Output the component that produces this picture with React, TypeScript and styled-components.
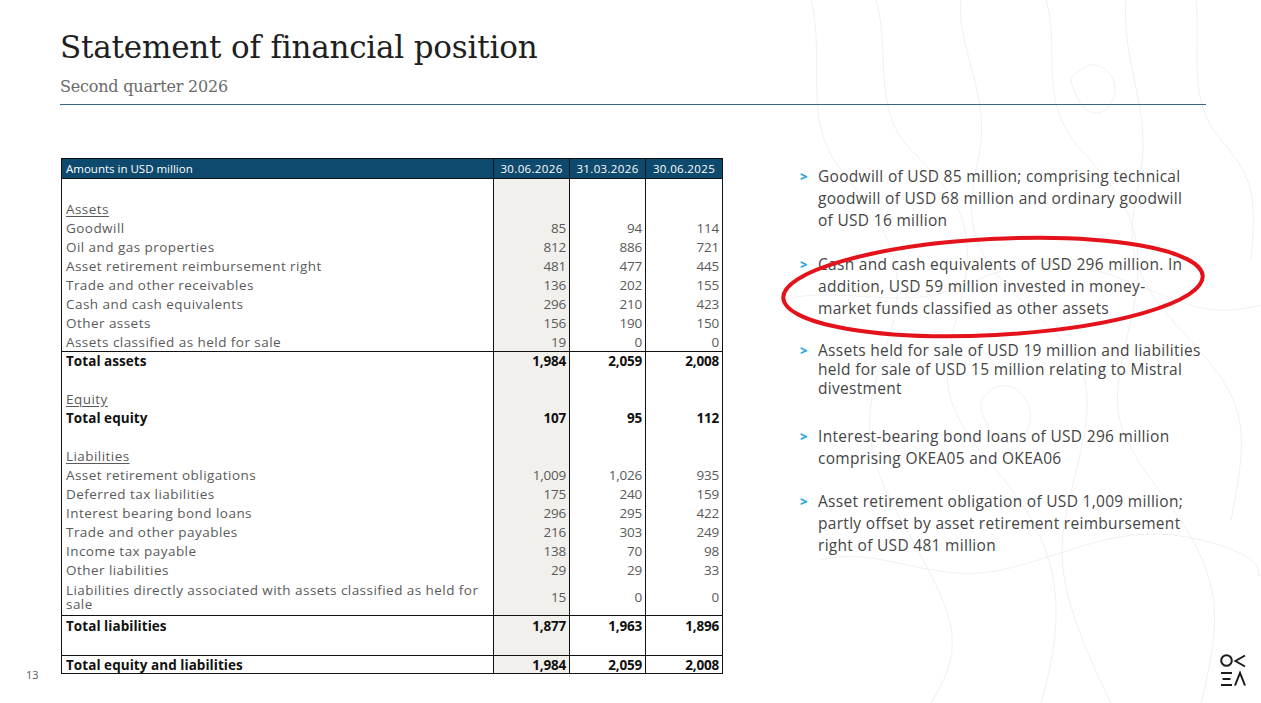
import React from 'react';
import styled, { createGlobalStyle } from 'styled-components';

const GlobalStyle = createGlobalStyle`
    html, body {
        margin: 0;
        padding: 0;
        background: #ffffff;
    }
`;

const Slide = styled.div`
    position: relative;
    width: 1261px;
    height: 703px;
    overflow: hidden;
    background: #ffffff;
    display: flex;
    flex-direction: column;
    font-family: 'Open Sans', 'DejaVu Sans', sans-serif;
`;

const Contours = styled.svg`
    position: absolute;
    right: 0;
    top: 0;
    width: 480px;
    height: 703px;
    pointer-events: none;
`;

const Header = styled.header`
    position: relative;
    flex: none;
    margin: 0 55px 0 60px;
    padding-top: 27px;
    border-bottom: 1.5px solid #3b6683;
    height: 105px;
    box-sizing: border-box;
`;

const Title = styled.h1`
    margin: 0;
    font-family: 'DejaVu Serif', 'Liberation Serif', serif;
    font-weight: 400;
    font-size: 31px;
    line-height: 40px;
    color: #1f1f1f;
    letter-spacing: -0.2px;
`;

const Subtitle = styled.div`
    margin-top: 8px;
    font-family: 'DejaVu Serif', 'Liberation Serif', serif;
    font-size: 16px;
    line-height: 24px;
    color: #6a6a6a;
    letter-spacing: -0.2px;
`;

const Main = styled.main`
    position: relative;
    flex: 1;
    display: grid;
    grid-template-columns: 61px 661px 1fr auto;
    padding-top: 53px;
`;

const PageNumber = styled.div`
    align-self: end;
    padding: 0 0 21px 26px;
    font-size: 11px;
    color: #5a5a5a;
`;

const Table = styled.table`
    align-self: start;
    width: 661px;
    border-collapse: collapse;
    table-layout: fixed;
    border: 1px solid #111;
    font-size: 13.5px;
`;

const HeadCell = styled.th<{ $num?: boolean }>`
    height: 19px;
    padding: 0 4px;
    background: #0e4a6e;
    color: #ffffff;
    font-weight: 400;
    font-size: 11.5px;
    letter-spacing: ${({ $num }) => ($num ? '0.35px' : '0')};
    text-align: ${({ $num }) => ($num ? 'center' : 'left')};
    border-left: ${({ $num }) => ($num ? '1px solid #111' : 'none')};
    border-bottom: 1px solid #111;
`;

const Row = styled.tr<{ $ruled?: boolean; $h?: number }>`
    height: ${({ $h }) => $h ?? 19}px;
    border-top: ${({ $ruled }) => ($ruled ? '1px solid #111' : 'none')};
`;

const Label = styled.td<{ $bold?: boolean; $heading?: boolean; $top?: boolean }>`
    padding: ${({ $top }) => ($top ? '3px' : '0')} 10px 0 4px;
    line-height: 14px;
    vertical-align: ${({ $top }) => ($top ? 'top' : 'middle')};
    color: ${({ $bold }) => ($bold ? '#111' : '#5a5a5a')};
    font-weight: ${({ $bold }) => ($bold ? 700 : 400)};
    letter-spacing: ${({ $bold }) => ($bold ? '0.05px' : '0.45px')};
    text-decoration: ${({ $heading }) => ($heading ? 'underline' : 'none')};
    text-underline-offset: 2px;
    white-space: nowrap;
`;

const Num = styled.td<{ $bold?: boolean; $shade?: boolean; $top?: boolean }>`
    padding: ${({ $top }) => ($top ? '3px' : '0')} 3px 0 0;
    vertical-align: ${({ $top }) => ($top ? 'top' : 'middle')};
    text-align: right;
    line-height: 14px;
    border-left: 1px solid #111;
    background: ${({ $shade }) => ($shade ? '#f1f0ec' : 'transparent')};
    color: ${({ $bold }) => ($bold ? '#111' : '#5a5a5a')};
    font-weight: ${({ $bold }) => ($bold ? 700 : 400)};
    letter-spacing: -0.2px;
`;

const Notes = styled.ul`
    list-style: none;
    margin: 0;
    padding: 7px 0 0 78px;
`;

const Note = styled.li<{ $tight?: boolean; $after?: number }>`
    position: relative;
    display: flex;
    gap: 10px;
    font-size: 15.5px;
    letter-spacing: 0.3px;
    line-height: ${({ $tight }) => ($tight ? 19 : 22)}px;
    color: #454545;
    margin-bottom: ${({ $after }) => $after ?? 22}px;
    white-space: nowrap;
`;

const Chevron = styled.span`
    color: #2aa8e0;
    font-weight: 800;
    font-size: 13px;
    width: 8px;
`;

const Circle = styled.svg`
    position: absolute;
    left: -22px;
    top: -26px;
    width: 430px;
    height: 118px;
    overflow: visible;
    pointer-events: none;
`;

const LogoWrap = styled.div`
    align-self: end;
    padding: 0 14px 12px 0;
`;

type Line = { label: string; v?: [string, string, string]; bold?: boolean; heading?: boolean; ruled?: boolean; h?: number; top?: boolean };

const lines: Line[] = [
    { label: '', h: 21 },
    { label: 'Assets', heading: true },
    { label: 'Goodwill', v: ['85', '94', '114'] },
    { label: 'Oil and gas properties', v: ['812', '886', '721'] },
    { label: 'Asset retirement reimbursement right', v: ['481', '477', '445'] },
    { label: 'Trade and other receivables', v: ['136', '202', '155'] },
    { label: 'Cash and cash equivalents', v: ['296', '210', '423'] },
    { label: 'Other assets', v: ['156', '190', '150'] },
    { label: 'Assets classified as held for sale', v: ['19', '0', '0'] },
    { label: 'Total assets', v: ['1,984', '2,059', '2,008'], bold: true, ruled: true },
    { label: '' },
    { label: 'Equity', heading: true },
    { label: 'Total equity', v: ['107', '95', '112'], bold: true },
    { label: '' },
    { label: 'Liabilities', heading: true },
    { label: 'Asset retirement obligations', v: ['1,009', '1,026', '935'] },
    { label: 'Deferred tax liabilities', v: ['175', '240', '159'] },
    { label: 'Interest bearing bond loans', v: ['296', '295', '422'] },
    { label: 'Trade and other payables', v: ['216', '303', '249'] },
    { label: 'Income tax payable', v: ['138', '70', '98'] },
    { label: 'Other liabilities', v: ['29', '29', '33'] },
    { label: 'Liabilities directly associated with assets classified as held for\nsale', v: ['15', '0', '0'], h: 36 },
    { label: 'Total liabilities', v: ['1,877', '1,963', '1,896'], bold: true, ruled: true, h: 40, top: true },
    { label: 'Total equity and liabilities', v: ['1,984', '2,059', '2,008'], bold: true, ruled: true, h: 18 },
];

const notes: { text: string[]; tight?: boolean; after?: number; circled?: boolean }[] = [
    { text: ['Goodwill of USD 85 million; comprising technical', 'goodwill of USD 68 million and ordinary goodwill', 'of USD 16 million'] },
    { text: ['Cash and cash equivalents of USD 296 million. In', 'addition, USD 59 million invested in money-', 'market funds classified as other assets'], circled: true },
    { text: ['Assets held for sale of USD 19 million and liabilities', 'held for sale of USD 15 million relating to Mistral', 'divestment'], tight: true, after: 27 },
    { text: ['Interest-bearing bond loans of USD 296 million', 'comprising OKEA05 and OKEA06'], after: 21 },
    { text: ['Asset retirement obligation of USD 1,009 million;', 'partly offset by asset retirement reimbursement', 'right of USD 481 million'] },
];

const contourPaths = [
    'M30 0 C45 60 20 120 60 170 S130 260 110 330 S70 430 120 520 S190 640 150 703',
    'M95 0 C110 50 90 110 130 150 S200 220 180 300 S155 400 215 470 S290 600 260 703',
    'M180 0 C175 40 205 90 200 140 S170 230 230 290 S320 360 300 450 S260 560 330 703',
    'M265 0 C280 50 255 100 300 150 S370 230 350 320 S325 420 385 500 S440 620 420 703',
    'M345 0 C340 60 370 110 360 170 S335 260 400 330 S470 420 450 520',
    'M415 0 C420 50 405 100 440 140 S475 200 470 260',
    'M0 300 C60 285 120 310 170 290 S260 250 330 275 S420 320 480 305',
    'M40 560 C100 545 150 585 220 570 S340 520 420 540 S470 580 480 575',
    'M300 70 C315 55 340 75 333 97 S305 118 296 97 S288 78 300 70',
    'M210 390 C232 375 255 402 248 425 S218 448 208 428 S195 402 210 390',
];

const Logo = () => (
    <svg width="27" height="32" viewBox="0 0 27 32" fill="none" stroke="#1c1c1c" strokeWidth="2">
        <circle cx="6.5" cy="6.5" r="5.3" />
        <polyline points="25,1.5 15.5,7 25,12.5" />
        <line x1="1" y1="19" x2="12" y2="19" />
        <line x1="2.5" y1="25" x2="10.5" y2="25" />
        <line x1="1" y1="31" x2="12" y2="31" />
        <polyline points="15,31.5 20,19 25,31.5" />
    </svg>
);

export default function App() {
    return (
        <Slide>
            <GlobalStyle />
            <Contours viewBox="0 0 480 703" fill="none" stroke="#ececec" strokeWidth="0.8">
                {contourPaths.map((d, i) => (
                    <path key={i} d={d} />
                ))}
            </Contours>
            <Header>
                <Title>Statement of financial position</Title>
                <Subtitle>Second quarter 2026</Subtitle>
            </Header>
            <Main>
                <PageNumber>13</PageNumber>
                <Table>
                    <colgroup>
                        <col style={{ width: 432 }} />
                        <col style={{ width: 76 }} />
                        <col style={{ width: 76 }} />
                        <col style={{ width: 77 }} />
                    </colgroup>
                    <thead>
                        <tr>
                            <HeadCell>Amounts in USD million</HeadCell>
                            <HeadCell $num>30.06.2026</HeadCell>
                            <HeadCell $num>31.03.2026</HeadCell>
                            <HeadCell $num>30.06.2025</HeadCell>
                        </tr>
                    </thead>
                    <tbody>
                        {lines.map((l, i) => (
                            <Row key={i} $ruled={l.ruled} $h={l.h}>
                                <Label $bold={l.bold} $heading={l.heading} $top={l.top}>
                                    {l.label.split('\n').map((part, j) => (
                                        <React.Fragment key={j}>
                                            {j > 0 && <br />}
                                            {part}
                                        </React.Fragment>
                                    ))}
                                </Label>
                                {[0, 1, 2].map((c) => (
                                    <Num key={c} $shade={c === 0} $bold={l.bold} $top={l.top}>
                                        {l.v ? l.v[c] : ''}
                                    </Num>
                                ))}
                            </Row>
                        ))}
                    </tbody>
                </Table>
                <Notes>
                    {notes.map((n, i) => (
                        <Note key={i} $tight={n.tight} $after={n.after}>
                            <Chevron>&gt;</Chevron>
                            <span>
                                {n.text.map((t, j) => (
                                    <React.Fragment key={j}>
                                        {j > 0 && <br />}
                                        {t}
                                    </React.Fragment>
                                ))}
                            </span>
                            {n.circled && (
                                <Circle viewBox="0 0 430 118">
                                    <ellipse
                                        cx="215"
                                        cy="60"
                                        rx="210"
                                        ry="48"
                                        transform="rotate(-3 215 60)"
                                        fill="none"
                                        stroke="#e3121b"
                                        strokeWidth="4"
                                    />
                                </Circle>
                            )}
                        </Note>
                    ))}
                </Notes>
                <LogoWrap>
                    <Logo />
                </LogoWrap>
            </Main>
        </Slide>
    );
}
